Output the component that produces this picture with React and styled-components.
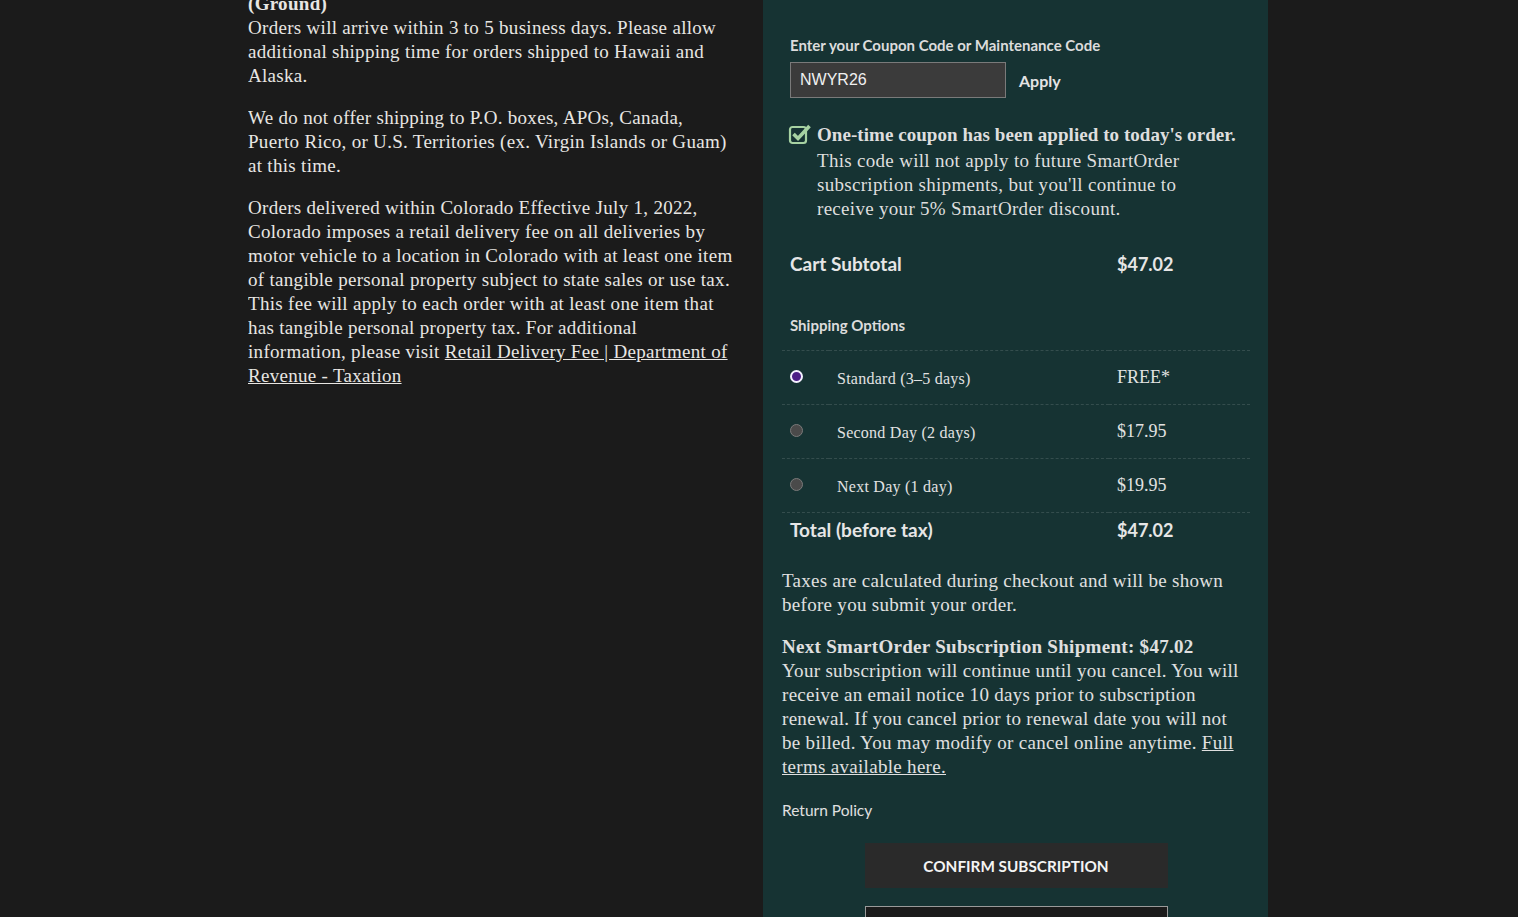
import styled, { createGlobalStyle } from 'styled-components';

const GlobalStyle = createGlobalStyle`
  html {
    overflow-y: scroll;
    background: #1b1b1b;
  }
  body {
    margin: 0;
    background: #1b1b1b;
    color: #e8e6e3;
    font-family: "Liberation Serif", "Times New Roman", serif;
  }
  ::-webkit-scrollbar {
    width: 15px;
  }
  ::-webkit-scrollbar-track {
    background: #2c2c2c;
    border-left: 1px solid #141414;
  }
  ::-webkit-scrollbar-thumb {
    background: #a3a3a3;
    border-radius: 8px;
    border: 3px solid #2c2c2c;
  }
`;

const serif = `"Liberation Serif", "Times New Roman", serif`;
const sans = `Lato, "Open Sans", sans-serif`;

const Page = styled.div`
  display: grid;
  grid-template-columns: 515px 505px;
  margin-left: 248px;
  height: 100vh;
  overflow: hidden;
`;

const InfoColumn = styled.div`
  width: 487px;
  margin-top: -8px;
`;

const Para = styled.p`
  margin: 0 0 18px;
  font-family: ${serif};
  font-size: 19px;
  letter-spacing: 0.3px;
  line-height: 24px;
  color: #e8e6e3;

  a {
    color: inherit;
    text-decoration: underline;
  }
`;

const Summary = styled.div`
  background: #163333;
  padding: 36px 18px 0 19px;
  display: flex;
  flex-direction: column;
`;

const CouponBlock = styled.div`
  padding: 0 8px;
`;

const FieldLabel = styled.div`
  font-family: ${sans};
  font-weight: 700;
  font-size: 15px;
  line-height: 18px;
  color: #dcdcdc;
  margin-bottom: 8px;
`;

const CouponRow = styled.div`
  display: flex;
  align-items: center;
  gap: 13px;
`;

const CodeInput = styled.input`
  box-sizing: border-box;
  width: 216px;
  height: 36px;
  padding: 0 9px;
  background: #3b3b3b;
  border: 1px solid #7a7a7a;
  color: #f0f0f0;
  font-family: "Liberation Sans", Arial, sans-serif;
  font-size: 16px;
  outline: none;
`;

const ApplyButton = styled.button`
  background: none;
  border: none;
  padding: 0;
  font-family: ${sans};
  font-weight: 700;
  font-size: 16px;
  color: #e4e4e4;
  cursor: pointer;
`;

const Notice = styled.div`
  display: flex;
  gap: 5px;
  margin-top: 25px;
  margin-left: -2px;
`;

const NoticeText = styled.div`
  width: 414px;
  font-family: ${serif};
  font-size: 19px;
  letter-spacing: 0.3px;
  line-height: 24px;
  color: #dedede;

  strong {
    display: block;
    white-space: nowrap;
    letter-spacing: 0.05px;
    margin-bottom: 2px;
  }
`;

const Table = styled.div`
  display: grid;
  grid-template-columns: 47px 280px 1fr;
  margin-top: 19px;
`;

const SumLabel = styled.div`
  grid-column: 1 / 3;
  padding: ${(p) => p.$pad || '15px'} 8px;
  font-family: ${sans};
  font-weight: 700;
  font-size: 19px;
  line-height: 18px;
  color: #e6e6e6;
  border-top: ${(p) => (p.$line ? '1px dashed rgba(255,255,255,0.13)' : 'none')};
`;

const SumValue = styled(SumLabel)`
  grid-column: 3;
  font-size: 18px;
`;

const SectionTitle = styled.div`
  grid-column: 1 / 4;
  padding: 28px 8px 16px;
  font-family: ${sans};
  font-weight: 700;
  font-size: 15px;
  line-height: 18px;
  color: #dcdcdc;
`;

const Cell = styled.div`
  display: flex;
  align-items: center;
  height: 53px;
  padding: 0 8px;
  border-top: 1px dashed rgba(255, 255, 255, 0.13);
  font-family: ${serif};
  color: #e2e2e2;
`;

const RadioCell = styled(Cell)`
  padding: 0 0 0 8px;
`;

const OptionName = styled(Cell)`
  font-size: 16px;
  letter-spacing: 0.25px;
  padding-top: 2px;
  height: 51px;
`;

const OptionPrice = styled(Cell)`
  font-size: 18px;
`;

const Radio = styled.span`
  display: block;
  box-sizing: border-box;
  width: 13px;
  height: 13px;
  border-radius: 50%;
  margin-top: -3px;
  background: ${(p) => (p.$checked ? '#4b1d86' : '#4a4a4a')};
  border: ${(p) => (p.$checked ? '2.5px solid #f4f0ff' : '1px solid #7a7a7a')};
`;

const BodyText = styled.p`
  margin: ${(p) => p.$mt || '0'} 0 0;
  font-family: ${serif};
  font-size: 19px;
  letter-spacing: 0.3px;
  line-height: 24px;
  color: #e0e0e0;

  strong {
    display: block;
  }
  a {
    color: inherit;
    text-decoration: underline;
  }
`;

const PolicyLink = styled.a`
  margin-top: 21px;
  font-family: ${sans};
  font-size: 15.5px;
  line-height: 20px;
  color: #e0e0e0;
  text-decoration: none;
`;

const ConfirmButton = styled.button`
  align-self: center;
  width: 303px;
  height: 45px;
  margin-top: 23px;
  background: #2a2a2a;
  border: none;
  color: #f4f4f4;
  font-family: ${sans};
  font-weight: 700;
  font-size: 15.3px;
  text-transform: uppercase;
  cursor: pointer;
`;

const SecondaryButton = styled.button`
  align-self: center;
  width: 303px;
  height: 45px;
  margin-top: 18px;
  background: #1b1b1b;
  border: 1px solid #9a9a9a;
  flex-shrink: 0;
`;

const IconBox = styled.svg`
  flex-shrink: 0;
  margin-top: -2px;
`;

const CheckIcon = () => (
  <IconBox width="24" height="26" viewBox="0 0 24 26">
    <rect x="2" y="6" width="16" height="16" rx="2.5" fill="none" stroke="#a6d2a2" strokeWidth="2.2" />
    <path d="M5.5 13 L10 17.5 L21.5 5" fill="none" stroke="#a6d2a2" strokeWidth="3.6" />
  </IconBox>
);

const options = [
  { name: 'Standard (3–5 days)', price: 'FREE*', checked: true },
  { name: 'Second Day (2 days)', price: '$17.95' },
  { name: 'Next Day (1 day)', price: '$19.95' },
];

export default function App() {
  return (
    <>
      <GlobalStyle />
      <Page>
        <InfoColumn>
          <Para>
            <strong>(Ground)</strong>
            <br />
            Orders will arrive within 3 to 5 business days. Please allow additional shipping time for
            orders shipped to Hawaii and Alaska.
          </Para>
          <Para>
            We do not offer shipping to P.O. boxes, APOs, Canada, Puerto Rico, or U.S. Territories (ex.
            Virgin Islands or Guam) at this time.
          </Para>
          <Para>
            Orders delivered within Colorado Effective July 1, 2022, Colorado imposes a retail delivery
            fee on all deliveries by motor vehicle to a location in Colorado with at least one item of
            tangible personal property subject to state sales or use tax. This fee will apply to each
            order with at least one item that has tangible personal property tax. For additional
            information, please visit <a href="#">Retail Delivery Fee | Department of Revenue - Taxation</a>
          </Para>
        </InfoColumn>

        <Summary>
          <CouponBlock>
            <FieldLabel>Enter your Coupon Code or Maintenance Code</FieldLabel>
            <CouponRow>
              <CodeInput defaultValue="NWYR26" />
              <ApplyButton>Apply</ApplyButton>
            </CouponRow>
            <Notice>
              <CheckIcon />
              <NoticeText>
                <strong>One-time coupon has been applied to today's order.</strong>
                This code will not apply to future SmartOrder subscription shipments, but you'll continue
                to receive your 5% SmartOrder discount.
              </NoticeText>
            </Notice>
          </CouponBlock>

          <Table>
            <SumLabel>Cart Subtotal</SumLabel>
            <SumValue>$47.02</SumValue>
            <SectionTitle>Shipping Options</SectionTitle>
            {options.map((o) => [
              <RadioCell key={o.name + '-r'}>
                <Radio $checked={o.checked} />
              </RadioCell>,
              <OptionName key={o.name + '-n'}>{o.name}</OptionName>,
              <OptionPrice key={o.name + '-p'}>{o.price}</OptionPrice>,
            ])}
            <SumLabel $line $pad="8px">Total (before tax)</SumLabel>
            <SumValue $line $pad="8px">$47.02</SumValue>
          </Table>

          <BodyText $mt="22px">
            Taxes are calculated during checkout and will be shown before you submit your order.
          </BodyText>
          <BodyText $mt="18px">
            <strong>Next SmartOrder Subscription Shipment: $47.02</strong>
            Your subscription will continue until you cancel. You will receive an email notice 10 days
            prior to subscription renewal. If you cancel prior to renewal date you will not be billed. You
            may modify or cancel online anytime. <a href="#">Full terms available here.</a>
          </BodyText>

          <PolicyLink href="#">Return Policy</PolicyLink>
          <ConfirmButton>Confirm Subscription</ConfirmButton>
          <SecondaryButton />
        </Summary>
      </Page>
    </>
  );
}
